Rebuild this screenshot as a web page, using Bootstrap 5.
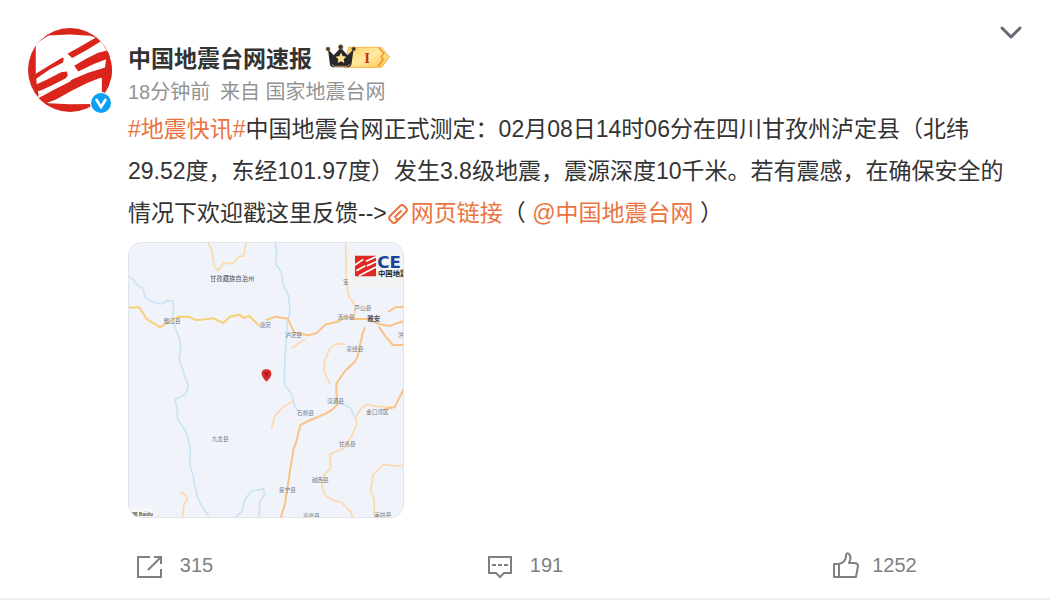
<!DOCTYPE html>
<html lang="zh-CN">
<head>
<meta charset="utf-8">
<meta name="viewport" content="width=device-width, initial-scale=1">
<title>中国地震台网速报</title>
<link href="https://cdn.jsdelivr.net/npm/bootstrap@5.3.0/dist/css/bootstrap.min.css" rel="stylesheet">
<style>
body{font-family:"Liberation Sans","Noto Sans CJK SC",sans-serif;color:#333;background:#fff}
a{color:#eb7340;text-decoration:none}
.post{padding:28px 28px 0}
.avatar{width:84px;height:84px}
.verified{right:0;bottom:-2px;width:22px;height:22px}
.author{font-size:23px;line-height:32px;font-weight:700;color:#333}
.meta,.meta a{font-size:20px;line-height:32px;color:#939393}
.heading{padding-top:15px}
.meta{padding-top:1px}
.post-text{font-size:23px;line-height:42px}
.map{width:276px;height:276px;border-radius:14px}
.more{top:20px;right:24px}
.action{font-size:20px;line-height:30px;color:#808080}
.actions{margin-top:32px;border-bottom:2px solid #f0f0f2;padding-bottom:18px}
.like{gap:12px}
</style>
</head>
<body>
<article class="position-relative">
  <div class="post d-flex gap-3">
    <a href="#" class="avatar position-relative flex-shrink-0" aria-label="中国地震台网速报">
      <svg class="d-block" width="84" height="84" viewBox="27 24 249 249" aria-hidden="true">
        <defs><clipPath id="disc"><circle cx="151.500" cy="148.500" r="124.500"/></clipPath></defs>
        <g clip-path="url(#disc)">
          <path fill="#d9251c" d="M27 24h249v249H27z"/>
          <path fill="#fff" d="M50 70 88 46 150 43 212 47 240 58 262 92 254 150 246 171 246 236 222 249 150 250 88 247 62 241 54 200 50 160Z"/>
          <path fill="#d9251c" d="M49 160 85 138 128 112 133 113 131 126 92 146 50 175Z M48 193 85 176 125 155 142 153 145 164 139 173 100 193 65 209 48 212Z M48 228 100 204 155 178 205 157 249 143 280 132 280 172 240 172 202 187 155 211 110 236 78 248 50 248Z M144 100 185 77 231 51 242 64 200 90 158 113Z M164 136 198 116 235 97 280 86 280 112 261 116 224 130 176 153Z"/>
          <path fill="#fff" d="M54 226 100 201 150 177 155 181 100 209 56 233Z"/>
        </g>
      </svg>
      <svg class="verified position-absolute" viewBox="0 0 22 22" aria-hidden="true"><circle cx="11" cy="11" r="11" fill="#fff"/><circle cx="11" cy="11" r="10" fill="#0aa0f7"/><path d="m6 7 5 8 5-8" fill="none" stroke="#fff" stroke-width="2.600"/></svg>
    </a>
    <div class="flex-grow-1">
      <header class="heading">
        <div class="d-flex align-items-center">
          <a href="#" class="author">中国地震台网速报</a>
          <svg class="ms-2" width="72" height="32" viewBox="600 -4 216 96" role="img" aria-label="I">
            <defs><linearGradient id="gold" x2="1" y2="1"><stop stop-color="#ffd25b"/><stop offset=".5" stop-color="#ffeaa0"/><stop offset="1" stop-color="#ffc247"/></linearGradient></defs>
            <path d="M686 16h98l24 29-23 31H674Z" transform="translate(0 -7)" fill="url(#gold)" stroke="#f6b546" stroke-width="3"/>
            <path d="m777 11 15 16-8 10 5 9-15 20" fill="none" stroke="#ed8b22" stroke-width="4"/>
            <path d="m624 14 17 19 21-23 21 23 18-19-7 48q-2 6-9 7h-46q-7-1-9-7Z" fill="#29272d"/>
            <g fill="#3e3434" stroke="#a5793d" stroke-width="2"><circle cx="624" cy="14" r="6"/><circle cx="662" cy="8" r="7"/><circle cx="701" cy="14" r="6"/></g>
            <path d="m635 60 9 6h36l11-6" fill="none" stroke="#c69751" stroke-width="3"/>
            <path d="m663 25 5 10 11 2-8 8 2 11-10-5-10 5 2-11-8-8 11-2Z" fill="#ffe38a"/>
            <text x="741" y="55" text-anchor="middle" font-family="Liberation Serif,serif" font-weight="700" font-size="44" fill="#bd321d">I</text>
          </svg>
        </div>
        <div class="meta"><a href="#">18分钟前</a><span class="ms-2">&#8202;来自 <a href="#">国家地震台网</a></span></div>
      </header>
      <p class="post-text mb-2"><a href="#">#地震快讯#</a>中国地震台网正式测定：02月08日14时06分在四川甘孜州泸定县（北纬29.52度，东经101.97度）发生3.8级地震，震源深度10千米。若有震感，在确保安全的情况下欢迎戳这里反馈--&gt;<a href="#"><svg width="24" height="23" viewBox="0 0 24 23" fill="none" stroke="currentColor" stroke-width="2" stroke-linecap="round" stroke-linejoin="round" aria-hidden="true"><path d="M8 8l5-5q2-2 4 0l2 2q2 2 0 4l-6 6q-2 2-4 1M15 13l-6 6q-2 2-4 0l-2-2q-2-2 0-4l6-6M8 14l6-6"/></svg>网页链接</a>（ <a href="#">@中国地震台网</a> ）</p>
      <a href="#" class="d-block map overflow-hidden" aria-label="地震位置地图">
        <svg class="d-block" width="276" height="276" viewBox="0 0 828 828" font-family="Noto Sans CJK SC,sans-serif" font-size="17">
          <path fill="#f0f3fa" d="M0 0h828v828H0z"/>
          <g fill="none" stroke="#c9e4f5" stroke-width="5" stroke-linejoin="round">
            <path d="m0 104 15 8 13 18 15 9 11 30 22 12 24 5 17-10 17 1 3 17-2 35 8 32 11 28 4 35-5 24 10 31 8 24 10 29-7 23-24 14-10 0 8 34 0 28 18 26 12 22 9 43-2 45 10 33 6 35 9 34 16 32 16 20"/>
            <path d="m441 0 5 27-3 40 17 24 6 40 16 30 4 50-8 27-3 52-4 55-2 61 2 24 20 27 10 37 10 14"/>
            <path d="m606 482 18-2 24 8 20 10 12 28M320 828l22-20 8-36 22-25 34-7 4 16-15 24-2 53"/>
          </g>
          <g fill="none" stroke="#fcd9aa" stroke-width="5" stroke-linejoin="round">
            <path d="m239 0 13 26 6 43 12 17 12-14 4-11 18 5 14-4 17-20 12 1 8-43"/>
            <path d="m653 0 2 120 7 43 20 30-4 43M652 307l-25-2-22 15-16 38 0 33 18 36M496 477l-30 18-26 28-10 38M684 523l2 25-18 40-22 31-40 18 2 41-20 20-6 36 10 27 24 14 23 5 29 28 6 20M828 670l-24 2-38-4-30 29-8 50 10 23 2 58M158 750l14 8 6 14-10 15-5 41M492 318l40-28M684 523l18-25 14-11 30 6 50 4"/>
          </g>
          <g fill="none" stroke="#f9c388" stroke-width="6" stroke-linejoin="round">
            <path d="m414 234 30-10 35 6 20 42 42 8 24-6 27-26 40-10 20-15 28 8 40 0 35 16 30 5 20-8 27-7 28-47 38-40"/>
            <path d="m711 256-8 21-14 66-8 16-30 28-26 38 0 28 4 34-16 16-20 12-52 22-24 12-12 50-8 20-10 61-10 65-6 41-15 49-4 39"/>
            <path d="m752 254 24 34 19 21 33 0M764 503l36-8 28-55M780 210l22-14 26-2"/>
          </g>
          <path d="m0 195 11 2 23-1 22 35 40 24 55-31 34 1 21 10 49-6 31 14 20-19 29-6 11 10 18-6 30 30" fill="none" stroke="#f7d176" stroke-width="6"/>
          <g fill="#777e89">
            <text x="107" y="242">雅江县</text><text x="395" y="255">康定</text><text x="471" y="284">泸定县</text><text x="629" y="231">天全县</text><text x="679" y="205">芦山县</text><text x="655" y="326">荥经县</text><text x="645" y="127">宝</text><text x="810" y="286">洪</text><text x="597" y="482">汉源县</text><text x="714" y="515">金口河区</text><text x="507" y="519">石棉县</text><text x="632" y="612">甘洛县</text><text x="551" y="720">越西县</text><text x="453" y="750">冕宁县</text><text x="524" y="827">喜德县</text><text x="739" y="825">美姑县</text><text x="251" y="598">九龙县</text>
          </g>
          <text x="246" y="117" font-size="19" fill="#4a4e56">甘孜藏族自治州</text><text x="718" y="237" font-size="19" font-weight="700" fill="#4a4e56">雅安</text>
          <path d="m0 797 70 3 13 28H0Z" fill="#f8f8f8"/><text x="5" y="821" font-size="15" font-weight="700" fill="#555">2图 Baidu</text>
          <path fill="#f2f3f3" d="M656 30h172v107H660Z"/>
          <g transform="translate(681 41)"><path fill="#df2924" d="M0 0h63v62H0Z"/><path d="m0 28 25-17M4 45l27-15M33 17 63 3M35 31l28-13M12 60l51-26" stroke="#fff" stroke-width="5"/></g>
          <text x="748" y="77" font-family="DejaVu Sans,sans-serif" font-size="50" font-weight="700" fill="#18439b">CE</text>
          <text x="750" y="101" font-size="22" font-weight="700" fill="#222">中国地震</text>
          <path d="M415 419q-17-17-14-28 4-10 15-9 11 0 14 10 2 12-15 27Z" fill="#d92b2b"/><path d="m409 389 4 8 7-6-5 13" fill="none" stroke="#8b1719" stroke-width="3"/>
          <rect x="1" y="1" width="826" height="826" rx="41" fill="none" stroke="#dfe3e9" stroke-width="3"/>
        </svg>
      </a>
    </div>
  </div>
  <button type="button" class="more btn p-0 border-0 position-absolute d-flex" aria-label="更多"><svg width="30" height="25" viewBox="0 0 30 25" fill="none" stroke="#626973" stroke-width="3" stroke-linecap="round" stroke-linejoin="round"><path d="m6 8 9 9 9-9"/></svg></button>
  <footer class="actions row g-0">
    <div class="col-4 text-center"><button type="button" class="action btn p-0 border-0 d-inline-flex align-items-center gap-3" aria-label="转发 315"><svg width="27" height="30" viewBox="0 0 27 30" fill="none" stroke="currentColor" stroke-width="2"><path d="M13 7H1v20h23v-8M11 20 24 7M17 7h7v7"/></svg>315</button></div>
    <div class="col-4 text-center"><button type="button" class="action btn p-0 border-0 d-inline-flex align-items-center gap-3" aria-label="评论 191"><svg width="27" height="30" viewBox="0 0 27 30" fill="none" stroke="currentColor" stroke-width="2"><path d="M2 7h22v16h-7l-4 4-4-4H2Z"/><path d="M5 15h4m2 0h4m2 0h4"/></svg>191</button></div>
    <div class="col-4 text-center"><button type="button" class="action like btn p-0 border-0 d-inline-flex align-items-center" aria-label="赞 1252"><svg width="27" height="30" viewBox="3 0 27 30" fill="none" stroke="currentColor" stroke-width="2" stroke-linejoin="round"><path d="M4 14h5v13H4Zm5 0q7-2 7-8 0-4 3-2 3 3 0 9h5q4 0 4 3l-2 11H9"/></svg>1252</button></div>
  </footer>
</article>
<script src="https://cdn.jsdelivr.net/npm/bootstrap@5.3.0/dist/js/bootstrap.bundle.min.js"></script>
</body>
</html>
